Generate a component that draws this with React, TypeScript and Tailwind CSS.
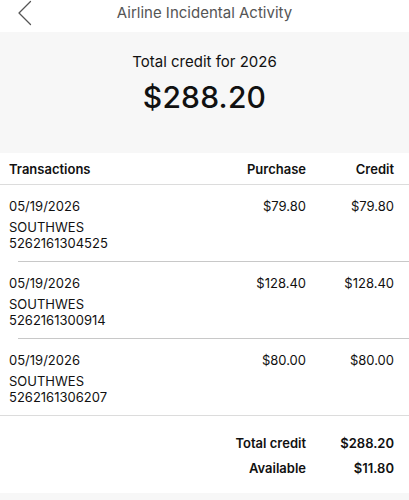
const rows = [
  { date: "05/19/2026", merchant: "SOUTHWES", ref: "5262161304525", purchase: "$79.80", credit: "$79.80" },
  { date: "05/19/2026", merchant: "SOUTHWES", ref: "5262161300914", purchase: "$128.40", credit: "$128.40" },
  { date: "05/19/2026", merchant: "SOUTHWES", ref: "5262161306207", purchase: "$80.00", credit: "$80.00" },
];

function BackChevron() {
  return (
    <svg width="16" height="26" viewBox="0 0 16 26" fill="none" stroke="#555" strokeWidth="1.3" strokeLinecap="round" strokeLinejoin="round">
      <path d="M13.5 1.5 L2 13 L13.5 24.5" />
    </svg>
  );
}

export default function App() {
  return (
    <div className="w-[409px] h-[500px] overflow-hidden bg-white text-[#111] font-['Inter',sans-serif]">
      {/* Nav bar */}
      <header className="relative flex h-[32px] items-start justify-center pt-[2px]">
        <button type="button" className="absolute left-[17px] top-0" aria-label="Back">
          <BackChevron />
        </button>
        <h1 className="text-[15px] leading-[22px] text-[#555]">Airline Incidental Activity</h1>
      </header>

      {/* Summary */}
      <section className="flex h-[121px] flex-col items-center bg-[#f7f7f7] pt-[19px]">
        <p className="text-[15px] leading-[22px]">Total credit for 2026</p>
        <p className="mt-[5px] text-[30px] font-medium leading-[38px] tracking-[0.2px]">$288.20</p>
      </section>

      {/* Table header */}
      <div className="flex h-[32px] items-center border-b border-[#dcdcdc] pl-[9px] pr-[15px] pt-[2px] text-[13px] font-semibold">
        <span className="flex-1">Transactions</span>
        <span className="w-[100px] text-right">Purchase</span>
        <span className="w-[88px] text-right">Credit</span>
      </div>

      {/* Rows */}
      <div>
        {rows.map((r, i) => {
          const last = i === rows.length - 1;
          return (
            <div key={r.ref} className={last ? "" : "pl-[18px]"}>
              <div
                className={
                  "flex h-[77px] pr-[15px] pt-[12px] text-[13px] " +
                  (last ? "border-b border-[#dcdcdc] pl-[9px]" : "border-b border-[#c8c8c8]")
                }
              >
                <div className={last ? "flex-1" : "flex-1 -ml-[9px]"}>
                  <p className="leading-[18px]">{r.date}</p>
                  <p className="mt-[4px] leading-[16px]">{r.merchant}</p>
                  <p className="leading-[16px]">{r.ref}</p>
                </div>
                <span className="w-[100px] text-right leading-[18px]">{r.purchase}</span>
                <span className="w-[88px] text-right leading-[18px]">{r.credit}</span>
              </div>
            </div>
          );
        })}
      </div>

      {/* Totals */}
      <div className="flex flex-col gap-[5px] pr-[15px] pt-[17px] text-[13px] font-semibold leading-[20px]">
        <div className="flex justify-end">
          <span>Total credit</span>
          <span className="w-[88px] text-right">$288.20</span>
        </div>
        <div className="flex justify-end">
          <span>Available</span>
          <span className="w-[88px] text-right">$11.80</span>
        </div>
      </div>
      <div className="mt-[15px] h-[20px] bg-[#f7f7f7]" />
    </div>
  );
}
